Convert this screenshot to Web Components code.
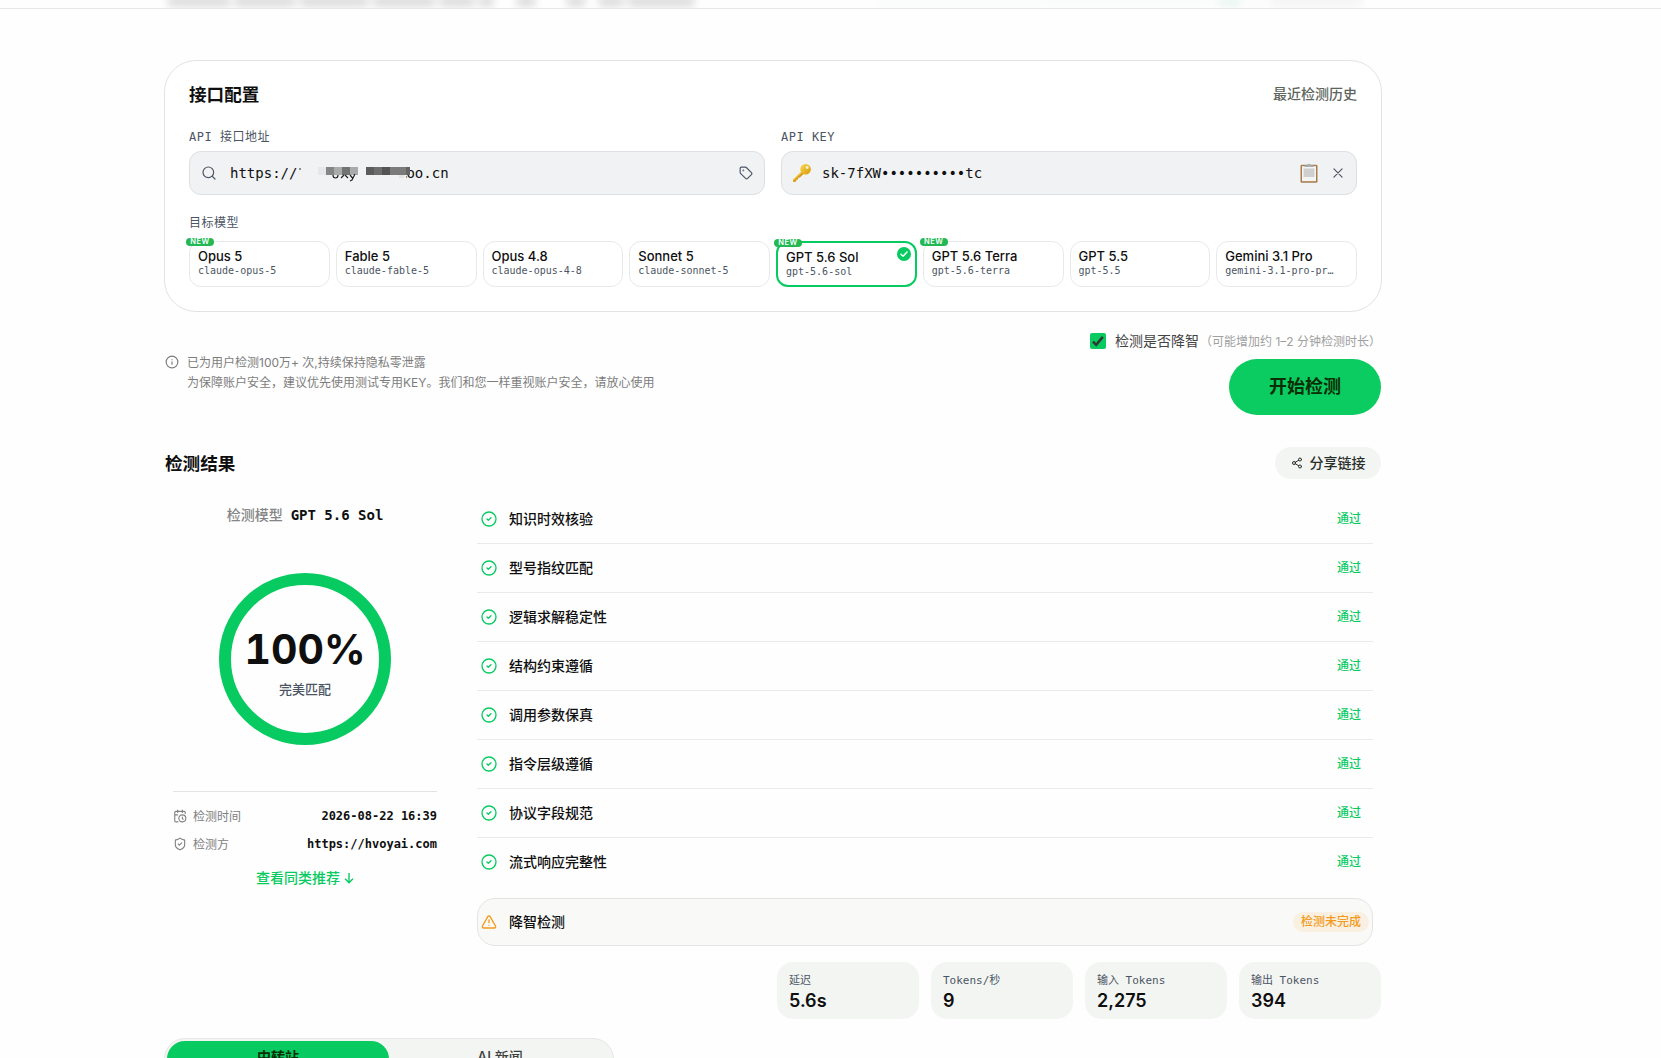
<!DOCTYPE html>
<html lang="zh-CN">
<head>
<meta charset="utf-8">
<title>接口检测</title>
<style>
  :root {
    --sans: Inter, "Noto Sans CJK SC", sans-serif;
    --mono: "DejaVu Sans Mono", "Noto Sans CJK SC", monospace;
    --green: #07cb61;
    --ink: #0f0f0f;
    --slate: #4b5563;
    --soft: #f3f5f3;
    --line: #e4e4e4;
  }
  html, body { margin: 0; height: 1058px; overflow: hidden; }
  body { background: #fefefe; font-family: var(--sans); color: var(--ink); }
</style>
</head>
<body>
<detect-page></detect-page>

<script>
const ICONS = {
  search: '<circle cx="11" cy="11" r="8"/><path d="m21 21-4.3-4.3"/>',
  tag: '<path d="M12.586 2.586A2 2 0 0 0 11.172 2H4a2 2 0 0 0-2 2v7.172a2 2 0 0 0 .586 1.414l8.704 8.704a2.426 2.426 0 0 0 3.42 0l6.58-6.58a2.426 2.426 0 0 0 0-3.42z"/><circle cx="7.5" cy="7.5" r=".5" fill="currentColor"/>',
  close: '<path d="M19 5 5 19M5 5l14 14"/>',
  info: '<circle cx="12" cy="12" r="10"/><path d="M12 16v-4.5M12 8h.01"/>',
  share: '<circle cx="18" cy="5" r="3"/><circle cx="6" cy="12" r="3"/><circle cx="18" cy="19" r="3"/><path d="m8.6 13.5 6.8 4M15.4 6.5l-6.8 4"/>',
  pass: '<circle cx="12" cy="12" r="10.5"/><path d="m9 12 2 2 4-4"/>',
  warn: '<path d="m21.7 18-8-14a2 2 0 0 0-3.5 0l-8 14A2 2 0 0 0 4 21h16a2 2 0 0 0 1.7-3"/><path d="M12 9v4M12 17h.01"/>',
  clock: '<path d="M21 7.5V6a2 2 0 0 0-2-2H5a2 2 0 0 0-2 2v14a2 2 0 0 0 2 2h3.5M16 2v4M8 2v4M3 10h5M17.5 17.5 16 16.3V14"/><circle cx="16" cy="16" r="6"/>',
  shield: '<path d="M20 13c0 5-3.5 7.5-7.66 8.95a1 1 0 0 1-.67-.01C7.5 20.5 4 18 4 13V6a1 1 0 0 1 1-1c2 0 4.5-1.2 6.24-2.72a1.17 1.17 0 0 1 1.52 0C14.51 3.81 17 5 19 5a1 1 0 0 1 1 1z"/><path d="m9 12 2 2 4-4"/>',
  tick: '<path d="M6 12.5 10.2 16.5 18 8"/>'
};

function define(name, render) {
  customElements.define(name, class extends HTMLElement {
    constructor() {
      super();
      this.attachShadow({ mode: 'open' });
    }
    connectedCallback() {
      this.shadowRoot.innerHTML = render(this);
    }
  });
}

define('ui-icon', el => `
  <style>
    :host { display: inline-flex; flex: none; }
    svg { display: block; fill: none; stroke: currentColor; stroke-linecap: round; stroke-linejoin: round; }
  </style>
  <svg width="${el.getAttribute('size') || 14}" height="${el.getAttribute('size') || 14}" viewBox="0 0 24 24"
    stroke-width="${el.getAttribute('weight') || 2}">${ICONS[el.getAttribute('name')]}</svg>
`);

define('key-glyph', () => `
  <style>:host { display: inline-flex; flex: none; margin-left: -1px; } svg { display: block; }</style>
  <svg width="20" height="20" viewBox="0 0 20 20">
    <defs><linearGradient id="g" x1="0" y1="0" x2="1" y2="1">
      <stop offset="0" stop-color="#fbd84a"/><stop offset="1" stop-color="#d99a0a"/>
    </linearGradient></defs>
    <path d="M9.6 8.6 1.2 16.6 1 18.7l2.2.3 1.2-1.2.1-1.4 1.5 0 .3-1.6 1.6-.2 4.1-4z" fill="#d79a12"/>
    <path d="M9.6 8.6 1.2 16.6l.6.6 8.8-8z" fill="#f6cf4c"/>
    <circle cx="13.6" cy="6.2" r="5.3" fill="url(#g)"/>
    <circle cx="15.2" cy="4.5" r="1.4" fill="#f6efdb"/>
  </svg>
`);

define('clipboard-glyph', () => `
  <style>:host { display: inline-flex; flex: none; } svg { display: block; }</style>
  <svg width="18" height="20" viewBox="0 0 18 20">
    <rect x=".5" y="1.7" width="17" height="18" rx="1.3" fill="#a87c4c"/>
    <rect x="2" y="3.2" width="14" height="15" fill="#f4f4f4"/>
    <path d="M3.6 5.500h10.800v8.500H3.600z" fill="#cfcfcf"/>
    <path d="M4.500 4V2.600h2.600a1.900 1.900 0 0 1 3.800 0h2.600V4z" fill="#a9b0b5"/>
  </svg>
`);

define('top-bar', () => `
  <style>
    :host { display: block; height: 8px; border-bottom: 1px solid #e8e8e8; overflow: hidden; }
    .haze { display: flex; margin-left: 168px; filter: blur(4px); }
    i { flex: none; height: 9px; margin: -3px 5px 0 0; background: #d6d6d6; }
  </style>
  <div class="haze">
    <i style="width:62px"></i><i style="width:60px"></i><i style="width:68px"></i><i style="width:62px"></i>
    <i style="width:34px"></i><i style="width:14px;margin-right:24px"></i><i style="width:18px;margin-right:32px"></i>
    <i style="width:18px;margin-right:14px"></i><i style="width:24px"></i><i style="width:66px"></i>
    <i style="width:150px;margin-left:180px;background:#fafbfb"></i><i style="width:180px;background:#f9fbfa"></i>
    <i style="width:22px;background:#e6f5f1"></i><i style="width:20px;background:#fbfbfb"></i><i style="width:90px;background:#f2f2f2"></i>
  </div>
`);

define('api-field', el => `
  <style>
    :host { display: block; font-family: var(--mono); }
    label { display: block; font-size: 12px; line-height: 18px; letter-spacing: .5px; color: var(--slate); margin-bottom: 5px; }
    .box {
      display: flex; align-items: center; box-sizing: border-box; height: 44px; padding: 0 11px;
      border: 1px solid #dcdfe3; border-radius: 12px; background: #f1f2f4;
      font-size: 14px; color: var(--ink);
    }
    .value { flex: 1; }
    .end { display: flex; align-items: center; gap: 13px; color: var(--slate); }
    ::slotted([slot=start]) { color: var(--slate); }
  </style>
  <label>${el.getAttribute('label')}</label>
  <div class="box"><slot name="start"></slot><div class="value"><slot></slot></div><div class="end"><slot name="end"></slot></div></div>
`);

define('masked-url', () => `
  <style>
    :host { display: flex; position: relative; margin-left: 13px; }
    .gap { width: 109px; }
    svg { position: absolute; left: 67px; top: 0; }
  </style>
  <span>https://</span><span class="gap"></span><span>oo.cn</span>
  <svg width="114" height="21" viewBox="0 0 114 21">
    <path d="M3 3v2M2 4h2" stroke="#555" stroke-width=".8"/>
    <g shape-rendering="crispEdges">
      <path fill="#e6e7e8" d="M21 2h8v8h-8z"/><path fill="#858585" d="M29 2h8v8h-8z"/><path fill="#a9aaaa" d="M37 2h8v8h-8z"/>
      <path fill="#737373" d="M45 2h8v8h-8z"/><path fill="#a9aaaa" d="M53 2h8v8h-8z"/>
      <path fill="#5c5c5c" d="M69 2h8v8h-8z"/><path fill="#6c6d6c" d="M77 2h8v8h-8z"/><path fill="#545454" d="M85 2h8v8h-8z"/>
      <path fill="#7b7b7b" d="M93 2h16v8H93z"/><path fill="#646464" d="M109 2h4v8h-4z"/>
      <path fill="#e3e4e5" d="M102 10h5v3h-5z"/>
    </g>
    <path d="M36 10q0 3 2.500 3t2.500-3M44 13l3-3M48 10l3 3M53 10l2.500 3M58 9l-3 6-2 1M109 12h1" fill="none" stroke="#222" stroke-width="1.200"/>
  </svg>
`);

define('model-chip', el => `
  <style>
    :host { display: block; position: relative; box-sizing: border-box; min-width: 0; height: 46px; padding: 6px 8px 0; border: 1px solid #e8e9ea; border-radius: 12px; background: #fff; }
    :host([selected]) { border: 2px solid var(--green); }
    .name { font-size: 13px; line-height: 17px; font-weight: 500; white-space: nowrap; }
    .id { font: 10px/12px var(--mono); color: var(--slate); white-space: nowrap; overflow: hidden; text-overflow: ellipsis; width: 110px; }
    .new { position: absolute; left: -4px; top: -4px; width: 28px; height: 8px; border-radius: 4px; background: #22b954; color: #fff; font-size: 7.5px; line-height: 8px; font-weight: 600; letter-spacing: .6px; text-align: center; }
    .check { position: absolute; right: 4px; top: 4px; width: 14px; height: 14px; border-radius: 50%; background: var(--green); color: #fff; display: flex; align-items: center; justify-content: center; }
  </style>
  <div class="name">${el.getAttribute('name')}</div>
  <div class="id"><slot></slot></div>
  ${el.hasAttribute('new') ? '<span class="new">NEW</span>' : ''}
  ${el.hasAttribute('selected') ? '<span class="check"><ui-icon name="tick" size="12" weight="3"></ui-icon></span>' : ''}
`);

define('config-card', () => `
  <style>
    :host { display: block; box-sizing: border-box; height: 252px; margin: 0 -1px; padding: 23px 24px; border: 1px solid #e2e3e4; border-radius: 32px; background: #fff; }
    header { display: flex; align-items: center; justify-content: space-between; height: 21px; }
    h2 { margin: 0; font-size: 17.6px; line-height: 21px; font-weight: 600; }
    .history { font-size: 14px; line-height: 20px; font-weight: 500; color: #5d645c; margin-top: -1px; }
    .fields { display: grid; grid-template-columns: 1fr 1fr; gap: 16px; margin-top: 23px; }
    .label { margin-top: 19px; font: 12px/18px var(--mono); letter-spacing: .5px; color: var(--slate); }
    .models { display: grid; grid-template-columns: repeat(8, 1fr); gap: 6px; margin-top: 9px; }
    .key { margin-left: 10px; }
  </style>
  <header><h2>接口配置</h2><span class="history">最近检测历史</span></header>
  <div class="fields">
    <api-field label="API 接口地址">
      <ui-icon slot="start" name="search" size="16" weight="1.8"></ui-icon>
      <masked-url></masked-url>
      <ui-icon slot="end" name="tag" size="14"></ui-icon>
    </api-field>
    <api-field label="API KEY">
      <key-glyph slot="start"></key-glyph>
      <span class="key">sk-7fXW••••••••••tc</span>
      <clipboard-glyph slot="end"></clipboard-glyph>
      <ui-icon slot="end" name="close" size="14" weight="2"></ui-icon>
    </api-field>
  </div>
  <div class="label">目标模型</div>
  <div class="models">
    <model-chip name="Opus 5" new>claude-opus-5</model-chip>
    <model-chip name="Fable 5">claude-fable-5</model-chip>
    <model-chip name="Opus 4.8">claude-opus-4-8</model-chip>
    <model-chip name="Sonnet 5">claude-sonnet-5</model-chip>
    <model-chip name="GPT 5.6 Sol" new selected>gpt-5.6-sol</model-chip>
    <model-chip name="GPT 5.6 Terra" new>gpt-5.6-terra</model-chip>
    <model-chip name="GPT 5.5">gpt-5.5</model-chip>
    <model-chip name="Gemini 3.1 Pro">gemini-3.1-pro-preview</model-chip>
  </div>
`);

define('start-row', () => `
  <style>
    :host { display: flex; justify-content: space-between; height: 94px; margin-top: 20px; }
    .note { display: flex; gap: 8px; margin-top: 21px; font-size: 12px; line-height: 20px; color: #7d7d7d; }
    .note ui-icon { margin-top: 2px; }
    .side { display: flex; flex-direction: column; align-items: flex-end; }
    .opt { display: flex; align-items: center; height: 18px; font-size: 14px; color: #444; }
    .opt span:not(.box) { margin-top: -2px; }
    .box { width: 16px; height: 16px; border-radius: 2px; background: var(--green); margin-right: 9px; }
    .box svg { display: block; }
    .opt .hint { font-size: 12px; color: #a0a0a0; margin-left: 1px; }
    button { width: 152px; height: 56px; margin-top: 9px; padding: 0; border: 0; border-radius: 28px; background: #0acc61; color: #0c2e05; font: 600 18px/56px var(--sans); }
  </style>
  <div class="note"><ui-icon name="info" size="14"></ui-icon>
    <div>已为用户检测100万+ 次,持续保持隐私零泄露<br>为保障账户安全，建议优先使用测试专用KEY。我们和您一样重视账户安全，请放心使用</div>
  </div>
  <div class="side">
    <div class="opt">
      <span class="box"><svg width="16" height="16" viewBox="0 0 16 16"><path d="m3 8.600 3.200 3.200L12.800 3.800" fill="none" stroke="#2c3a30" stroke-width="2.600"/></svg></span>
      <span>检测是否降智</span><span class="hint">（可能增加约 1–2 分钟检测时长）</span>
    </div>
    <button>开始检测</button>
  </div>
`);

define('score-ring', () => `
  <style>
    :host { display: flex; flex-direction: column; align-items: center; box-sizing: border-box; width: 172px; height: 172px; padding-top: 39px; border: 12px solid var(--green); border-radius: 50%; }
    b { font-size: 41px; line-height: 50px; font-weight: 700; font-variant-numeric: tabular-nums; }
    span { font-size: 13px; line-height: 18px; margin-top: 6px; color: var(--slate); font-weight: 500; }
  </style>
  <b>100%</b><span>完美匹配</span>
`);

define('meta-row', el => `
  <style>
    :host { display: flex; align-items: center; height: 28px; font-size: 12px; color: #808080; }
    ui-icon { margin-right: 6px; }
    span { margin-top: -2px; }
    b { margin-left: auto; font: 700 12px/28px var(--mono); color: var(--ink); }
  </style>
  <ui-icon name="${el.getAttribute('icon')}" size="14" weight="1.9"></ui-icon><span>${el.getAttribute('label')}</span><b><slot></slot></b>
`);

define('summary-panel', () => `
  <style>
    :host { display: flex; flex-direction: column; align-items: center; width: 264px; padding: 0 8px; }
    .model { display: flex; gap: 8px; margin-top: 9px; font-size: 14px; line-height: 22px; color: #858585; font-weight: 500; }
    .model b { font-family: var(--mono); color: var(--ink); font-weight: 700; }
    score-ring { margin-top: 47px; }
    .meta { align-self: stretch; margin-top: 46px; padding-top: 10px; border-top: 1px solid var(--line); }
    .more { display: flex; align-items: center; gap: 4px; margin-top: 9px; font-size: 14px; line-height: 22px; font-weight: 500; color: var(--green); }
  </style>
  <div class="model"><span>检测模型</span><b>GPT 5.6 Sol</b></div>
  <score-ring></score-ring>
  <div class="meta">
    <meta-row icon="clock" label="检测时间">2026-08-22 16:39</meta-row>
    <meta-row icon="shield" label="检测方">https://hvoyai.com</meta-row>
  </div>
  <div class="more"><span>查看同类推荐</span><svg width="10" height="12" viewBox="0 0 10 12" fill="none" stroke="currentColor" stroke-width="1.400"><path d="M5 1v9.600M1 6.800l4 4 4-4"/></svg></div>
`);

define('check-row', el => `
  <style>
    :host { display: flex; align-items: center; box-sizing: border-box; height: 49px; padding: 0 4px; border-bottom: 1px solid #e9eae9; }
    :host([last]) { border-color: transparent; }
    :host([warn]) { height: 48px; margin-top: 11px; padding: 0 3px; border: 1px solid #e4e5e3; border-radius: 18px; background: #f9f9f7; }
    ui-icon { color: var(--green); margin-right: 12px; }
    .name { flex: 1; margin-top: -2px; font-size: 14px; font-weight: 500; }
    .state { padding: 0 8px; border-radius: 10px; font-size: 12px; line-height: 20px; font-weight: 500; color: var(--green); }
    :host([warn]) ui-icon, :host([warn]) .state { color: #f39b1c; }
    :host([warn]) .state { background: #f9f0e2; }
  </style>
  <ui-icon name="${el.hasAttribute('warn') ? 'warn' : 'pass'}" size="16"></ui-icon>
  <span class="name"><slot></slot></span><span class="state">${el.getAttribute('state') || '通过'}</span>
`);

define('stat-tile', el => `
  <style>
    :host { display: block; box-sizing: border-box; height: 57px; padding: 11px 12px; border-radius: 16px; background: var(--soft); }
    .label { font: 11px/16px var(--mono); color: var(--slate); }
    .value { font-size: 18px; line-height: 24px; font-weight: 600; }
  </style>
  <div class="label">${el.getAttribute('label')}</div><div class="value"><slot></slot></div>
`);

define('result-section', () => `
  <style>
    :host { display: block; margin-top: 21px; }
    header { display: flex; align-items: center; justify-content: space-between; height: 32px; }
    h2 { margin: -2px 0 0; font-size: 17.6px; font-weight: 600; }
    .share { display: flex; align-items: center; justify-content: center; gap: 7px; width: 106px; height: 32px; border-radius: 16px; background: var(--soft); font-size: 14px; font-weight: 500; color: #2b2f2b; }
    .share span { margin-top: -2px; }
    .body { display: flex; gap: 32px; margin-top: 16px; }
    .list { flex: 1; padding-right: 8px; }
    .stats { display: grid; grid-template-columns: repeat(4, 142px); gap: 12px; justify-content: end; margin-top: 16px; }
  </style>
  <header><h2>检测结果</h2><div class="share"><ui-icon name="share" size="12"></ui-icon><span>分享链接</span></div></header>
  <div class="body">
    <summary-panel></summary-panel>
    <div class="list">
      <check-row>知识时效核验</check-row>
      <check-row>型号指纹匹配</check-row>
      <check-row>逻辑求解稳定性</check-row>
      <check-row>结构约束遵循</check-row>
      <check-row>调用参数保真</check-row>
      <check-row>指令层级遵循</check-row>
      <check-row>协议字段规范</check-row>
      <check-row last>流式响应完整性</check-row>
      <check-row warn state="检测未完成">降智检测</check-row>
    </div>
  </div>
  <div class="stats">
    <stat-tile label="延迟">5.6s</stat-tile>
    <stat-tile label="Tokens/秒">9</stat-tile>
    <stat-tile label="输入 Tokens">2,275</stat-tile>
    <stat-tile label="输出 Tokens">394</stat-tile>
  </div>
`);

define('feed-tabs', () => `
  <style>
    :host { display: flex; box-sizing: border-box; width: 450px; height: 42px; margin: 19px 0 0 -1px; padding: 2px; border: 1px solid #e6e8e6; border-radius: 21px; background: var(--soft); font-size: 14px; line-height: 31px; text-align: center; }
    span { flex: 1; height: 36px; border-radius: 18px; color: #3c403c; font-weight: 500; }
    .on { background: var(--green); color: #0c2e05; font-weight: 600; }
  </style>
  <span class="on">中转站</span><span>AI 新闻</span>
`);

define('detect-page', () => `
  <style>
    :host { display: block; }
    main { width: 1216px; margin: 51px 0 0 165px; }
  </style>
  <top-bar></top-bar>
  <main>
    <config-card></config-card>
    <start-row></start-row>
    <result-section></result-section>
    <feed-tabs></feed-tabs>
  </main>
`);
</script>
</body>
</html>
